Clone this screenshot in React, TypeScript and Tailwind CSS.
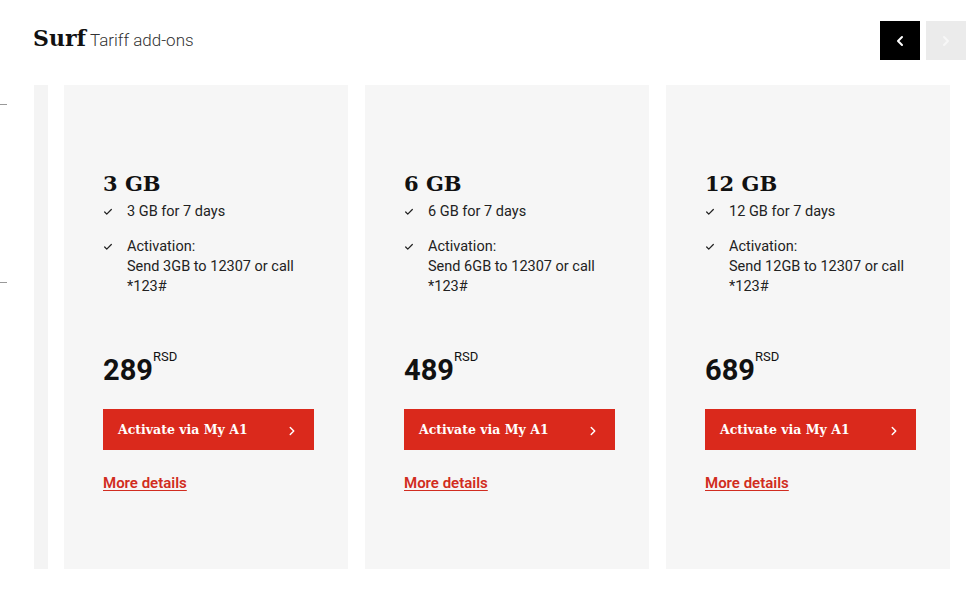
import { ChevronLeft, ChevronRight, Check } from 'lucide-react';

const plans = [
  { gb: '3', price: '289' },
  { gb: '6', price: '489' },
  { gb: '12', price: '689' },
];

const slab = { fontFamily: '"DejaVu Serif", serif' };

function PlanCard({ gb, price }: { gb: string; price: string }) {
  return (
    <div className="flex h-[484px] w-[284px] shrink-0 flex-col bg-[#f6f6f6] pl-[39px] pr-[20px] pt-[85px]">
      <h2 className="text-[21px] font-bold leading-[28px] text-[#111]" style={slab}>
        {gb} GB
      </h2>
      <ul className="mt-[4px] space-y-[15px] text-[14.5px] leading-[20px] text-[#222]">
        <li className="flex">
          <Check className="mr-[14px] mt-[5px] h-[10px] w-[10px] shrink-0" strokeWidth={3} />
          <span>{gb} GB for 7 days</span>
        </li>
        <li className="flex">
          <Check className="mr-[14px] mt-[5px] h-[10px] w-[10px] shrink-0" strokeWidth={3} />
          <span>
            Activation:
            <br />
            Send {gb}GB to 12307 or call
            <br />
            *123#
          </span>
        </li>
      </ul>
      <div className="mt-[55px] flex items-start text-[#111]">
        <span className="text-[29px] font-bold leading-[36px]">{price}</span>
        <span className="mt-[-3px] text-[13px] leading-[16px]">RSD</span>
      </div>
      <button className="mt-[21px] flex h-[41px] w-[211px] items-center justify-between bg-[#da291c] pl-[15px] pr-[15px] pt-[2px] text-[12.5px] font-bold text-white">
        <span style={slab}>Activate via My A1</span>
        <ChevronRight className="h-[14px] w-[14px]" strokeWidth={2.5} />
      </button>
      <a className="mt-[22px] w-fit text-[15px] font-semibold text-[#d12c20] underline underline-offset-2">
        More details
      </a>
    </div>
  );
}

export default function App() {
  return (
    <div
      className="h-[592px] w-[975px] overflow-hidden bg-white"
      style={{ fontFamily: 'Roboto, "Open Sans", sans-serif' }}
    >
      <header className="flex items-end justify-between pl-[33px] pr-[9px] pt-[21px]">
        <div className="mb-[7px] flex items-baseline gap-[4px]">
          <span className="text-[22px] font-bold leading-none text-[#111]" style={slab}>
            Surf
          </span>
          <span className="text-[17px] font-light text-[#333]">Tariff add-ons</span>
        </div>
        <div className="flex gap-[6px]">
          <button className="flex h-[39px] w-[40px] items-center justify-center bg-black text-white">
            <ChevronLeft className="h-[16px] w-[16px]" strokeWidth={3} />
          </button>
          <button className="flex h-[39px] w-[40px] items-center justify-center bg-[#ebebeb] text-[#f7f7f7]">
            <ChevronRight className="h-[16px] w-[16px]" strokeWidth={3} />
          </button>
        </div>
      </header>

      <div className="mt-[25px] flex">
        <div className="w-[34px] shrink-0 pt-[19px]">
          <div className="h-px w-[7px] bg-[#999]" />
          <div className="mt-[177px] h-px w-[7px] bg-[#999]" />
        </div>
        <div className="h-[484px] w-[14px] shrink-0 bg-[#f4f4f4]" />
        <div className="ml-[16px] flex gap-[17px]">
          {plans.map((p) => (
            <PlanCard key={p.gb} gb={p.gb} price={p.price} />
          ))}
        </div>
      </div>
    </div>
  );
}
